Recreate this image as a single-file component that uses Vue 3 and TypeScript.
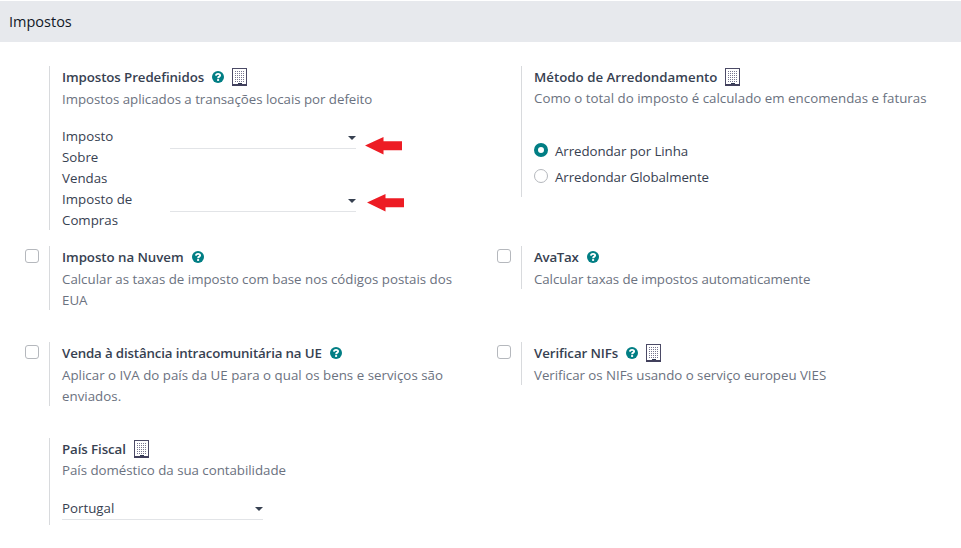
<script setup lang="ts">
import { ref } from 'vue'

interface Setting {
  id: string
  title: string
  lines: string[]
  help?: boolean
  company?: boolean
  checkbox?: boolean
}

const settings: Setting[] = [
  { id: 'defaults', title: 'Impostos Predefinidos', lines: ['Impostos aplicados a transações locais por defeito'], help: true, company: true },
  { id: 'rounding', title: 'Método de Arredondamento', lines: ['Como o total do imposto é calculado em encomendas e faturas'], company: true },
  { id: 'cloud', title: 'Imposto na Nuvem', lines: ['Calcular as taxas de imposto com base nos códigos postais dos', 'EUA'], help: true, checkbox: true },
  { id: 'avatax', title: 'AvaTax', lines: ['Calcular taxas de impostos automaticamente'], help: true, checkbox: true },
  { id: 'distance', title: 'Venda à distância intracomunitária na UE', lines: ['Aplicar o IVA do país da UE para o qual os bens e serviços são', 'enviados.'], help: true, checkbox: true },
  { id: 'vat', title: 'Verificar NIFs', lines: ['Verificar os NIFs usando o serviço europeu VIES'], help: true, company: true, checkbox: true },
  { id: 'country', title: 'País Fiscal', lines: ['País doméstico da sua contabilidade'], company: true },
]

const taxes = [
  { id: 'sales', lines: ['Imposto', 'Sobre', 'Vendas'] },
  { id: 'purchase', lines: ['Imposto de', 'Compras'] },
]

const rounding = ref('line')
const methods = [
  { value: 'line', label: 'Arredondar por Linha' },
  { value: 'global', label: 'Arredondar Globalmente' },
]

const windowRows = [3, 5, 7, 9, 11, 13]
const windowCols = [3, 5, 7, 9, 11]
</script>

<template>
  <main class="page">
    <h2 class="heading"><span>Impostos</span></h2>
    <div class="grid">
      <section v-for="s in settings" :key="s.id" class="setting" :class="s.id">
        <div class="left"><input v-if="s.checkbox" type="checkbox" class="check" :aria-label="s.title" /></div>
        <div class="right">
          <div class="title">
            <span class="name">{{ s.title }}</span>
            <svg v-if="s.help" class="help" viewBox="0 0 12 12">
              <circle cx="6" cy="6" r="6" fill="#017e84" />
              <path d="M3.9 4.6C4.1 2.4 8.1 2.3 8.1 4.4C8.1 5.7 6.1 5.6 6.1 7.2" fill="none" stroke="#fff" stroke-width="1.9" />
              <rect x="5.1" y="8.1" width="2" height="1.8" fill="#fff" />
            </svg>
            <svg v-if="s.company" class="building" viewBox="0 0 15 18" shape-rendering="crispEdges">
              <rect x="0.5" y="0.5" width="14" height="17" fill="#fff" stroke="#4b4a66" />
              <template v-for="y in windowRows" :key="y">
                <rect v-for="x in windowCols" :key="x" :x="x" :y="y" width="1" height="1" fill="#77768f" />
              </template>
              <rect x="6" y="15" width="4" height="3" fill="#2f3850" />
              <rect x="0" y="16" width="15" height="2" fill="#41405c" />
            </svg>
          </div>
          <div v-for="(line, i) in s.lines" :key="i" class="desc">{{ line }}</div>

          <div v-if="s.id === 'defaults'" class="taxes">
            <div v-for="t in taxes" :key="t.id" class="tax" :class="t.id">
              <div class="label"><div v-for="l in t.lines" :key="l">{{ l }}</div></div>
              <div class="select"><svg class="caret" viewBox="0 0 8 4"><path d="M0 0H8L4 4Z" fill="#374151" /></svg></div>
              <svg class="arrow" viewBox="0 0 37 18"><path d="M0 8.5L18.5 0V4.2H37V13.2H18.5V17.5Z" fill="#ed1c24" /></svg>
            </div>
          </div>

          <div v-if="s.id === 'rounding'" class="methods">
            <label v-for="m in methods" :key="m.value" class="method">
              <input v-model="rounding" type="radio" name="rounding" class="radio" :value="m.value" />
              <span class="method-name">{{ m.label }}</span>
            </label>
          </div>

          <div v-if="s.id === 'country'" class="select country-select">
            <span>Portugal</span>
            <svg class="caret" viewBox="0 0 8 4"><path d="M0 0H8L4 4Z" fill="#374151" /></svg>
          </div>
        </div>
      </section>
    </div>
  </main>
</template>

<style>
body { background: #fff; overflow: hidden; }
</style>

<style scoped>
* { box-sizing: border-box; }
.page { width: 961px; height: 548px; padding-top: 1px; color: #374151; font: 13.3px/21px "Open Sans", "Noto Sans", sans-serif; white-space: nowrap; }
.heading { margin: 0; height: 41px; padding: 0 9px; background: #e7e9ed; color: #111827; font-size: 14.5px; line-height: 42px; font-weight: 500; }
.grid { display: grid; grid-template-columns: 472px 472px; grid-template-rows: 180px 96px 96px 87px; padding: 24px 0 0 17px; }
.setting { display: flex; align-items: flex-start; }
.left { width: 32px; padding: 3px 0 0 8px; }
.right { width: 420px; border-left: 1px solid #d8dadd; padding-left: 12px; }
.defaults .right { height: 164px; }
.rounding .right { height: 131px; }
.cloud .right, .distance .right { height: 64px; }
.avatax .right, .vat .right { height: 43px; }
.country .right { height: 87px; }
.title { display: flex; align-items: center; height: 22px; color: #374151; font-weight: 600; letter-spacing: -0.09px; }
.defaults .title, .cloud .title, .avatax .title, .distance .title, .vat .title { margin-bottom: 1px; }
.rounding .title { letter-spacing: 0; }
.cloud .title { letter-spacing: -0.05px; }
.avatax .title { letter-spacing: -0.25px; }
.distance .title { letter-spacing: -0.15px; }
.help { width: 12px; height: 12px; margin-left: 8px; }
.building { width: 15px; height: 18px; margin-left: 8px; }
.desc { height: 21px; color: #6b7280; }
.avatax .desc { letter-spacing: -0.07px; }
.rounding .desc, .distance .desc { letter-spacing: 0.02px; }
.defaults .desc, .country .desc, .vat .desc { letter-spacing: -0.03px; }
.check { appearance: none; display: block; width: 14px; height: 14px; margin: 0; border: 1px solid #b5b8bd; border-radius: 3px; background: #fff; }
.taxes { padding-top: 16px; }
.tax { display: flex; align-items: flex-start; }
.label { width: 108px; }
.select { display: flex; align-items: center; justify-content: flex-end; width: 186px; height: 23px; border-bottom: 1px solid #e2e4e7; }
.caret { width: 8px; height: 4px; margin-top: 2px; }
.arrow { width: 37px; height: 18px; margin: 11px 0 0 9px; }
.purchase .arrow { margin: 5px 0 0 11px; }
.methods { padding-top: 28px; }
.method { display: flex; align-items: center; height: 26px; letter-spacing: -0.07px; }
.method-name { padding-top: 2px; }
.radio { appearance: none; width: 14px; height: 14px; margin: 0 7px 0 0; border: 1px solid #b5b8bd; border-radius: 50%; background: #fff; }
.radio:checked { border: 4px solid #017e84; }
.country-select { justify-content: space-between; width: 201px; height: 23px; margin-top: 16px; }
</style>
